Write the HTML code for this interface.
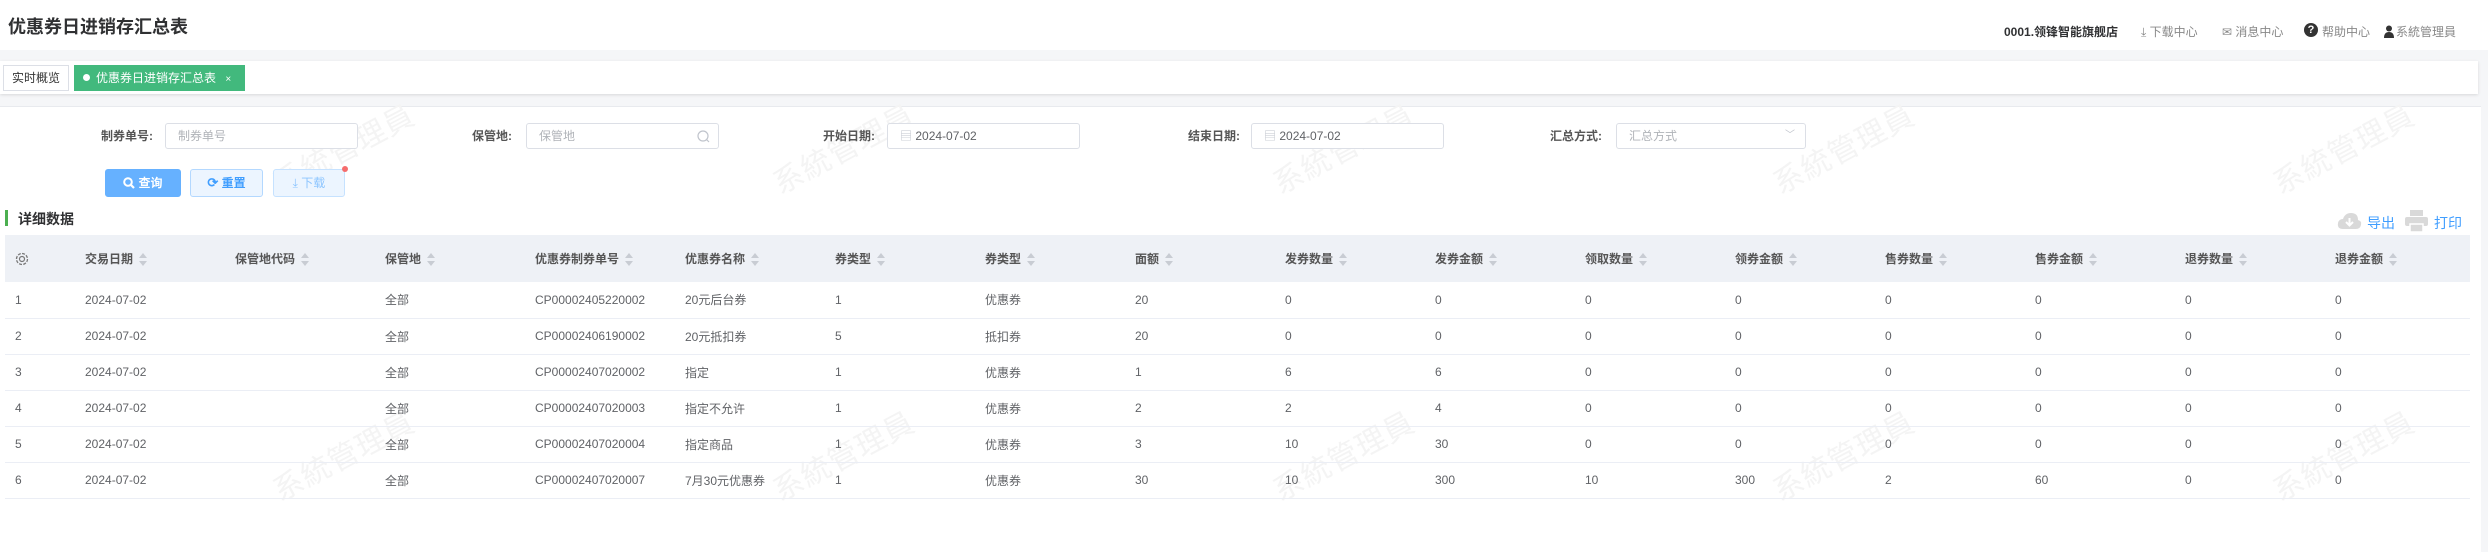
<!DOCTYPE html>
<html><head><meta charset="utf-8">
<style>
*{margin:0;padding:0;box-sizing:border-box}
body{width:2488px;height:552px;position:relative;overflow:hidden;background:#f5f6f8;font-family:"Liberation Sans","Noto Sans CJK SC",sans-serif;font-size:12px;color:#606266}
.a{position:absolute}
.top{left:0;top:0;width:2488px;height:50px;background:#fff}
.title{left:8px;top:13px;font-size:18px;font-weight:bold;color:#303133}
.hr{top:23px;font-size:12px;color:#888;white-space:nowrap}
.tabbar{left:0;top:61px;width:2478px;height:33px;background:#fff;box-shadow:0 1px 3px rgba(0,0,0,.12)}
.card{left:0;top:106px;width:2481px;height:446px;background:#fff;border-top:1px solid #e8eaee}
.lbl{font-weight:bold;color:#555;text-align:right;width:80px;line-height:26px}
.inp{height:26px;border:1px solid #dcdfe6;border-radius:3px;background:#fff;line-height:24px;padding-left:12px;color:#b0b3b8;width:193px}
.btn{top:169px;height:28px;border-radius:3px;line-height:26px;text-align:center;font-size:12px}
.wm{font-size:30px;color:#f4f4f4;transform:rotate(-28deg);white-space:nowrap;letter-spacing:1px}
table{position:absolute;left:5px;top:235px;width:2465px;border-collapse:collapse;table-layout:fixed}
th{height:47px;background:#eef1f6;text-align:left;font-weight:bold;color:#555;font-size:12px;padding-left:0}
td{height:36px;border-bottom:1px solid #ebeef5;text-align:left;font-size:12px;color:#606266}
th:first-child,td:first-child{padding-left:10px}
.s{display:inline-block;vertical-align:middle;margin-left:6px;width:8px;height:14px;position:relative}
.s:before{content:"";position:absolute;left:0;top:0;border:4px solid transparent;border-bottom:5px solid #c8ccd3;border-top:0}
.s:after{content:"";position:absolute;left:0;top:8px;border:4px solid transparent;border-top:5px solid #c8ccd3;border-bottom:0}
</style></head><body>
<div class="a top"></div>
<div class="a title">优惠券日进销存汇总表</div>
<div class="a hr" style="left:2004px;color:#303133;font-weight:bold">0001.领锋智能旗舰店</div>
<div class="a hr" style="left:2141px">⤓ 下载中心</div>
<div class="a hr" style="left:2222px">✉ 消息中心</div>
<div class="a" style="left:2304px;top:23px;width:14px;height:14px;border-radius:50%;background:#333;color:#fff;font-size:11px;font-weight:bold;text-align:center;line-height:14px">?</div>
<div class="a hr" style="left:2322px">帮助中心</div>
<svg class="a" style="left:2384px;top:25px" width="10" height="13" viewBox="0 0 10 13"><circle cx="5" cy="3.5" r="3" fill="#333"/><path d="M0 13 Q0 7 5 7 Q10 7 10 13Z" fill="#333"/></svg>
<div class="a hr" style="left:2396px">系統管理員</div>

<div class="a tabbar"></div>
<div class="a" style="left:3px;top:65px;width:66px;height:26px;border:1px solid #dcdfe6;line-height:24px;text-align:center;color:#333;background:#fff">实时概览</div>
<div class="a" style="left:74px;top:65px;width:171px;height:26px;background:#42b97d;color:#fff;line-height:26px;padding-left:9px;white-space:nowrap"><span style="display:inline-block;width:7px;height:7px;border-radius:50%;background:#fff;margin-right:6px;vertical-align:1px"></span>优惠券日进销存汇总表 <span style="font-size:10px;margin-left:6px">×</span></div>

<div class="a card"></div>
<div class="a wm" style="left:265px;top:125px">系統管理員</div>
<div class="a wm" style="left:765px;top:125px">系統管理員</div>
<div class="a wm" style="left:1265px;top:125px">系統管理員</div>
<div class="a wm" style="left:1765px;top:125px">系統管理員</div>
<div class="a wm" style="left:2265px;top:125px">系統管理員</div>
<div class="a wm" style="left:265px;top:432px">系統管理員</div>
<div class="a wm" style="left:765px;top:432px">系統管理員</div>
<div class="a wm" style="left:1265px;top:432px">系統管理員</div>
<div class="a wm" style="left:1765px;top:432px">系統管理員</div>
<div class="a wm" style="left:2265px;top:432px">系統管理員</div>

<div class="a lbl" style="left:73px;top:123px">制券单号:</div>
<div class="a inp" style="left:165px;top:123px">制券单号</div>
<div class="a lbl" style="left:432px;top:123px">保管地:</div>
<div class="a inp" style="left:526px;top:123px">保管地<svg class="a" style="right:8px;top:6px" width="13" height="13" viewBox="0 0 13 13"><circle cx="6" cy="6" r="5" fill="none" stroke="#c0c4cc" stroke-width="1.2"/><path d="M9.5 9.5 L12 12" stroke="#c0c4cc" stroke-width="1.2"/></svg></div>
<div class="a lbl" style="left:795px;top:123px">开始日期:</div>
<div class="a inp" style="left:887px;top:123px;color:#606266;padding-left:12px"><span style="color:#c0c4cc">▤</span> 2024-07-02</div>
<div class="a lbl" style="left:1160px;top:123px">结束日期:</div>
<div class="a inp" style="left:1251px;top:123px;color:#606266"><span style="color:#c0c4cc">▤</span> 2024-07-02</div>
<div class="a lbl" style="left:1522px;top:123px">汇总方式:</div>
<div class="a inp" style="left:1616px;top:123px;width:190px">汇总方式<span class="a" style="right:10px;top:0;color:#c0c4cc;font-size:10px">﹀</span></div>

<div class="a btn" style="left:105px;width:76px;background:#66b1ff;color:#fff;font-weight:bold;border:1px solid #66b1ff">
<svg style="vertical-align:-2px;margin-right:3px" width="12" height="12" viewBox="0 0 12 12"><circle cx="5" cy="5" r="3.8" fill="none" stroke="#fff" stroke-width="2"/><path d="M8 8 L11 11" stroke="#fff" stroke-width="2.2"/></svg>查询</div>
<div class="a btn" style="left:190px;width:73px;background:#ecf5ff;color:#409eff;border:1px solid #b3d8ff;font-weight:bold"><span style="font-size:13px">⟳</span> 重置</div>
<div class="a btn" style="left:273px;width:72px;background:#ecf5ff;color:#8cc5ff;border:1px solid #c6e2ff">⤓ 下载</div>
<div class="a" style="left:342px;top:166px;width:6px;height:6px;border-radius:50%;background:#f56c6c"></div>

<div class="a" style="left:5px;top:210px;width:3px;height:16px;background:#4caf50"></div>
<div class="a" style="left:18px;top:209px;font-size:14px;font-weight:bold;color:#303133">详细数据</div>

<svg class="a" style="left:2337px;top:212px" width="25" height="18" viewBox="0 0 25 18"><path d="M6 17 Q0 17 1 11 Q2 7 6 7 Q8 1 14 1 Q21 1 21 8 Q25 9 24 13 Q23 17 19 17Z" fill="#d9d9d9"/><path d="M12.5 6 V13 M9 10 L12.5 13.5 L16 10" stroke="#fff" stroke-width="2" fill="none"/></svg>
<div class="a" style="left:2367px;top:213px;font-size:14px;color:#409eff">导出</div>
<svg class="a" style="left:2405px;top:210px" width="23" height="22" viewBox="0 0 23 22"><rect x="5" y="0" width="13" height="6" fill="#d9d9d9"/><rect x="0" y="7" width="23" height="9" rx="2" fill="#d9d9d9"/><rect x="5" y="14" width="13" height="8" fill="#d9d9d9" stroke="#fff" stroke-width="1.5"/></svg>
<div class="a" style="left:2434px;top:213px;font-size:14px;color:#409eff">打印</div>

<table>
<colgroup><col style="width:80px"><col style="width:150px"><col style="width:150px"><col style="width:150px"><col style="width:150px"><col style="width:150px"><col style="width:150px"><col style="width:150px"><col style="width:150px"><col style="width:150px"><col style="width:150px"><col style="width:150px"><col style="width:150px"><col style="width:150px"><col style="width:150px"><col style="width:150px"><col style="width:135px"></colgroup>
<tr><th><svg width="14" height="14" viewBox="0 0 14 14" style="vertical-align:middle"><circle cx="7" cy="7" r="5.5" fill="none" stroke="#777" stroke-width="1.3" stroke-dasharray="3 1.3"/><circle cx="7" cy="7" r="2.5" fill="none" stroke="#777" stroke-width="1.2"/></svg></th>
<th>交易日期<i class="s"></i></th><th>保管地代码<i class="s"></i></th><th>保管地<i class="s"></i></th><th>优惠券制券单号<i class="s"></i></th><th>优惠券名称<i class="s"></i></th><th>券类型<i class="s"></i></th><th>券类型<i class="s"></i></th><th>面额<i class="s"></i></th><th>发券数量<i class="s"></i></th><th>发券金额<i class="s"></i></th><th>领取数量<i class="s"></i></th><th>领券金额<i class="s"></i></th><th>售券数量<i class="s"></i></th><th>售券金额<i class="s"></i></th><th>退券数量<i class="s"></i></th><th>退券金额<i class="s"></i></th></tr>
<tr><td>1</td><td>2024-07-02</td><td></td><td>全部</td><td>CP00002405220002</td><td>20元后台券</td><td>1</td><td>优惠券</td><td>20</td><td>0</td><td>0</td><td>0</td><td>0</td><td>0</td><td>0</td><td>0</td><td>0</td></tr>
<tr><td>2</td><td>2024-07-02</td><td></td><td>全部</td><td>CP00002406190002</td><td>20元抵扣券</td><td>5</td><td>抵扣券</td><td>20</td><td>0</td><td>0</td><td>0</td><td>0</td><td>0</td><td>0</td><td>0</td><td>0</td></tr>
<tr><td>3</td><td>2024-07-02</td><td></td><td>全部</td><td>CP00002407020002</td><td>指定</td><td>1</td><td>优惠券</td><td>1</td><td>6</td><td>6</td><td>0</td><td>0</td><td>0</td><td>0</td><td>0</td><td>0</td></tr>
<tr><td>4</td><td>2024-07-02</td><td></td><td>全部</td><td>CP00002407020003</td><td>指定不允许</td><td>1</td><td>优惠券</td><td>2</td><td>2</td><td>4</td><td>0</td><td>0</td><td>0</td><td>0</td><td>0</td><td>0</td></tr>
<tr><td>5</td><td>2024-07-02</td><td></td><td>全部</td><td>CP00002407020004</td><td>指定商品</td><td>1</td><td>优惠券</td><td>3</td><td>10</td><td>30</td><td>0</td><td>0</td><td>0</td><td>0</td><td>0</td><td>0</td></tr>
<tr><td>6</td><td>2024-07-02</td><td></td><td>全部</td><td>CP00002407020007</td><td>7月30元优惠券</td><td>1</td><td>优惠券</td><td>30</td><td>10</td><td>300</td><td>10</td><td>300</td><td>2</td><td>60</td><td>0</td><td>0</td></tr>
</table>
</body></html>
